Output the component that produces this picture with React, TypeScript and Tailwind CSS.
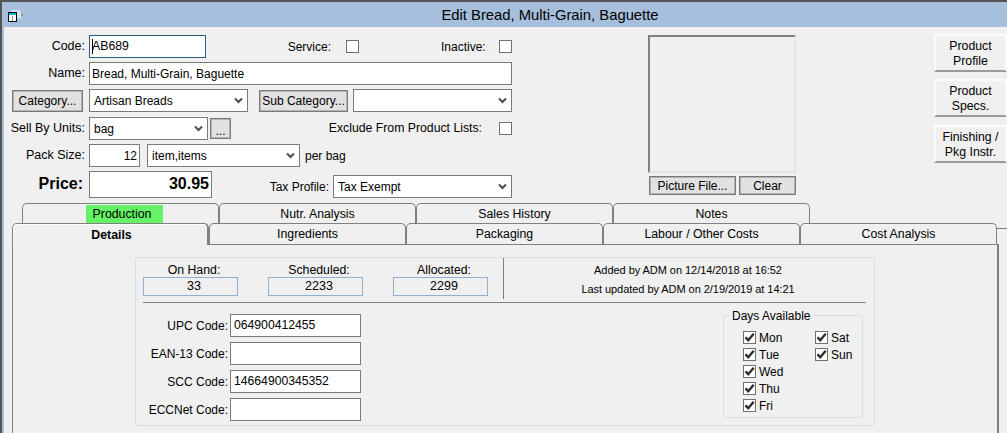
import type { ReactNode } from 'react'

const fieldBorder = 'border border-[#7a7a7a] bg-white'
const grayButton =
  'flex items-center justify-center border border-[#787878] bg-[#e1e1e1] text-[12px] leading-none shadow-[inset_0_0_0_1px_#b4b4b4]'
const raisedButton =
  'flex w-[73px] flex-col items-center justify-center border-2 border-[#fbfbfb] border-b-[#9a9a9a] bg-[#f0f0f0] pt-[2px] text-[12.3px] leading-[15px]'

function Chevron() {
  return (
    <svg width="9" height="7" viewBox="0 0 9 7" className="shrink-0">
      <path d="M1 1.5l3.5 3.5L8 1.5" fill="none" stroke="#4d4d4d" strokeWidth="2" />
    </svg>
  )
}

function Select({ value, className }: { value?: string; className: string }) {
  return (
    <div className={`flex h-[23px] items-center justify-between pl-[4px] pr-[4px] text-[12px] ${fieldBorder} ${className}`}>
      <span>{value}</span>
      <Chevron />
    </div>
  )
}

function Box({ checked }: { checked?: boolean }) {
  return (
    <span className="flex h-[13px] w-[13px] shrink-0 items-center justify-center border border-[#707070] bg-white">
      {checked && (
        <svg width="11" height="11" viewBox="0 0 11 11">
          <path d="M1.5 5.3l2.8 2.9L9.7 1.8" fill="none" stroke="#2f2f2f" strokeWidth="2.4" />
        </svg>
      )}
    </span>
  )
}

function Label({ children }: { children: ReactNode }) {
  return <span className="w-[84px] shrink-0 pr-[3px] text-right text-[12.5px]">{children}</span>
}

function Stat({ label, value }: { label: string; value: string }) {
  return (
    <div className="flex w-[95px] flex-col items-center">
      <span className="h-[14px] pl-[7px] text-[12.3px] leading-[14px]">{label}</span>
      <div className="flex h-[19px] w-full items-center justify-center border border-[#8fb0d0] pl-[7px] text-[12.5px]">
        {value}
      </div>
    </div>
  )
}

function CodeRow({ label, value }: { label: string; value?: string }) {
  return (
    <div className="flex h-[23px] items-center gap-[2px]">
      <span className="w-[85px] text-right text-[12px]">{label}</span>
      <div className={`flex h-[23px] w-[131px] items-center pl-[3px] text-[12.2px] ${fieldBorder}`}>{value}</div>
    </div>
  )
}

function Day({ name }: { name: string }) {
  return (
    <div className="flex h-[17px] items-center gap-[3px] text-[12px]">
      <Box checked />
      <span>{name}</span>
    </div>
  )
}

function BackTab({ children }: { children: ReactNode }) {
  return (
    <div className="flex h-[20px] w-[197px] items-end justify-center rounded-t-[5px] border-x border-t border-[#808080] text-[12.3px] leading-[17px]">
      {children}
    </div>
  )
}

function FrontTab({ label }: { label: string }) {
  return (
    <div className="flex h-[21px] w-[197px] items-center justify-center rounded-t-[5px] border-x border-t border-[#808080] text-[12.3px]">
      {label}
    </div>
  )
}

export default function App() {
  return (
    <div
      className="flex h-[433px] w-[1007px] flex-col overflow-hidden border-t-2 border-l-2 border-[#555] bg-[#f0f0f0] text-black"
      style={{ fontFamily: '"Liberation Sans", Arial, sans-serif' }}
    >
      {/* title bar */}
      <div className="relative flex h-[25px] shrink-0 items-center justify-center bg-[#a6bfdc] pl-[91px] pt-[1px] text-[14.8px]">
        <svg width="16" height="14" viewBox="0 0 16 14" className="absolute left-[5px] top-[7px]">
          <path d="M4 1.5h8.5l1 2v5.5h-4z" fill="#d5e6ee" stroke="#bfe9ee" />
          <rect x="14" y="5" width="2" height="2" fill="#7f8a96" />
          <rect x="1.5" y="3.5" width="8" height="9" fill="#fff" stroke="#000" />
          <path d="M2 5h7" stroke="#19b5c4" strokeWidth="2" />
          <path d="M5.5 7v5" stroke="#9a9a9a" />
        </svg>
        Edit Bread, Multi-Grain, Baguette
      </div>

      <div className="flex min-h-0 flex-1 border-l-2 border-[#a6bfdc]">
        <div className="flex min-w-0 flex-1 flex-col">
          {/* header form */}
          <div className="flex h-[176px] shrink-0">
            <div className="flex w-[644px] shrink-0 flex-col pt-[8px]">
              <div className="flex h-[23px] items-center">
                <Label>Code:</Label>
                <div className="ml-[1px] flex h-[23px] w-[117px] items-center border border-[#2b5a85] bg-white pl-[2px] text-[12.3px]">
                  <span className="-mr-px h-[15px] w-px bg-black" />
                  AB689
                </div>
                <span className="ml-[81px] w-[44px] text-right text-[12px]">Service:</span>
                <span className="ml-[15px]"><Box /></span>
                <span className="ml-[82px] w-[44px] text-right text-[12px]">Inactive:</span>
                <span className="ml-[14px]"><Box /></span>
              </div>

              <div className="mt-[4px] flex h-[23px] items-center">
                <Label>Name:</Label>
                <div className={`ml-[1px] flex h-[23px] w-[423px] items-center pl-[2px] text-[12px] ${fieldBorder}`}>
                  Bread, Multi-Grain, Baguette
                </div>
              </div>

              <div className="mt-[4px] flex h-[23px] items-center pl-[8px]">
                <button className={`h-[22px] w-[71px] ${grayButton}`}>Category...</button>
                <Select value="Artisan Breads" className="ml-[6px] w-[159px]" />
                <button className={`ml-[11px] h-[22px] w-[89px] ${grayButton}`}>Sub Category...</button>
                <Select className="ml-[5px] w-[159px]" />
              </div>

              <div className="mt-[5px] flex h-[23px] items-center">
                <Label>Sell By Units:</Label>
                <Select value="bag" className="ml-[1px] w-[119px]" />
                <button className={`ml-[2px] h-[21px] w-[21px] pt-[4px] ${grayButton}`}>...</button>
                <span className="ml-[96px] w-[155px] text-right text-[12.25px]">Exclude From Product Lists:</span>
                <span className="ml-[17px]"><Box /></span>
              </div>

              <div className="mt-[4px] flex h-[23px] items-center">
                <Label>Pack Size:</Label>
                <div className={`ml-[1px] flex h-[23px] w-[51px] items-center justify-end pr-[2px] text-[12px] ${fieldBorder}`}>
                  12
                </div>
                <Select value="item,items" className="ml-[7px] w-[153px]" />
                <span className="ml-[5px] text-[12px]">per bag</span>
              </div>

              <div className="mt-[4px] flex h-[27px] items-center">
                <span className="-mt-[2px] w-[79px] text-right text-[16px] font-bold">Price:</span>
                <div className={`ml-[6px] flex h-[27px] w-[123px] items-center justify-end pb-[2px] pr-[2px] text-[16px] font-bold ${fieldBorder}`}>
                  30.95
                </div>
                <span className="ml-[57px] mt-[4px] w-[60px] text-right text-[12px]">Tax Profile:</span>
                <Select value="Tax Exempt" className="ml-[4px] mt-[4px] w-[179px]" />
              </div>
            </div>

            {/* picture */}
            <div className="flex w-[148px] shrink-0 flex-col pt-[8px]">
              <div className="h-[138px] border-2 border-[#808080] border-r-[#e4e4e4] border-b-[#e4e4e4]" />
              <div className="mt-[3px] flex gap-[3px] pl-[1px]">
                <button className={`h-[19px] w-[87px] ${grayButton}`}>Picture File...</button>
                <button className={`h-[19px] w-[57px] ${grayButton}`}>Clear</button>
              </div>
            </div>

            {/* side buttons */}
            <div className="ml-[138px] flex flex-col pt-[7px]">
              <button className={`h-[38px] ${raisedButton}`}><span>Product</span><span>Profile</span></button>
              <button className={`mt-[7px] h-[38px] ${raisedButton}`}><span>Product</span><span>Specs.</span></button>
              <button className={`mt-[8px] h-[38px] ${raisedButton}`}><span>Finishing /</span><span>Pkg Instr.</span></button>
            </div>
          </div>

          {/* tabs */}
          <div className="flex h-[20px] shrink-0 pl-[18px]">
            <BackTab>
              <span className="ml-[7px] flex h-[18px] w-[77px] items-center justify-center bg-[#66f266] pr-[4px]">Production</span>
            </BackTab>
            <BackTab>Nutr. Analysis</BackTab>
            <BackTab>Sales History</BackTab>
            <BackTab>Notes</BackTab>
          </div>
          <div className="relative z-10 flex h-[21px] shrink-0 pl-[8px]">
            <div className="flex h-[22px] w-[197px] items-center justify-center rounded-t-[5px] border-t border-l border-r-2 border-[#808080] bg-[#f0f0f0] pl-[3px] pt-[2px] text-[12.3px] font-bold shadow-[inset_1px_1px_0_#ffffff]">
              Details
            </div>
            <FrontTab label="Ingredients" />
            <FrontTab label="Packaging" />
            <FrontTab label="Labour / Other Costs" />
            <FrontTab label="Cost Analysis" />
            <div className="mt-[5px] h-px flex-1 bg-[#808080]" />
          </div>

          {/* details panel */}
          <div className="ml-[8px] mr-[8px] min-h-0 flex-1 overflow-hidden border-t border-l border-r-2 border-[#808080] pl-[122px] pt-[12px]">
            <div className="h-[169px] w-[740px] rounded-[3px] border border-[#d5dfe8] pl-[7px] pr-[8px]">
              <div className="flex h-[45px] border-b border-[#808080]">
                <div className="flex h-[41px] w-[361px] gap-[30px] border-r border-[#808080] pt-[5px]">
                  <Stat label="On Hand:" value="33" />
                  <Stat label="Scheduled:" value="2233" />
                  <Stat label="Allocated:" value="2299" />
                </div>
                <div className="flex w-[362px] flex-col items-center pl-[6px] pt-[3px] text-[11px] leading-[19px] tracking-[-0.05px]">
                  <span>Added by ADM on 12/14/2018 at 16:52</span>
                  <span>Last updated by ADM on 2/19/2019 at 14:21</span>
                </div>
              </div>

              <div className="flex">
                <div className="flex w-[580px] flex-col gap-[5px] pt-[11px]">
                  <CodeRow label="UPC Code:" value="064900412455" />
                  <CodeRow label="EAN-13 Code:" />
                  <CodeRow label="SCC Code:" value="14664900345352" />
                  <CodeRow label="ECCNet Code:" />
                </div>
                <div className="relative mt-[12px] flex h-[103px] w-[140px] rounded-[3px] border border-[#d5dfe8] pl-[19px] pt-[13px]">
                  <span className="absolute left-[6px] top-[-7px] bg-[#f0f0f0] px-[2px] text-[12px] leading-[14px]">
                    Days Available
                  </span>
                  <div className="w-[72px]">
                    <Day name="Mon" />
                    <Day name="Tue" />
                    <Day name="Wed" />
                    <Day name="Thu" />
                    <Day name="Fri" />
                  </div>
                  <div>
                    <Day name="Sat" />
                    <Day name="Sun" />
                  </div>
                </div>
              </div>
            </div>
          </div>
        </div>
      </div>
    </div>
  )
}
